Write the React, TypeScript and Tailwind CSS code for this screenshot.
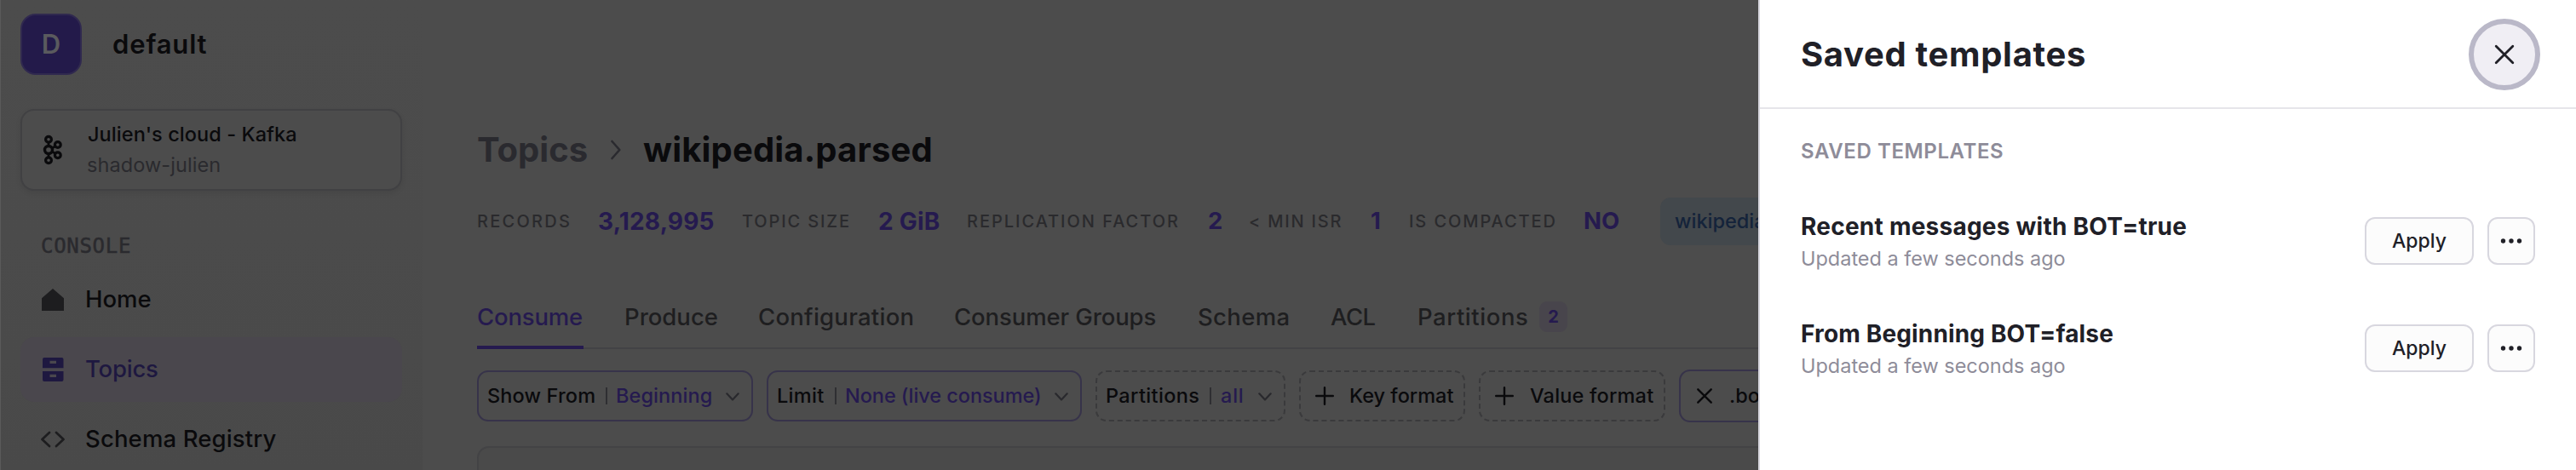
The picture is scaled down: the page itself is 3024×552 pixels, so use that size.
import React from "react";

function Chevron({ className }: { className: string }) {
  return (
    <svg className={className} width="16" height="10" viewBox="0 0 16 10" fill="none" stroke="#29292d" strokeWidth="2.2" strokeLinecap="round" strokeLinejoin="round">
      <path d="M1.3 1.3 8 8.4l6.7-7.1" />
    </svg>
  );
}

function Plus() {
  return (
    <svg className="w-[22px] shrink-0" height="22" viewBox="0 0 22 22" fill="none" stroke="#0a0a0c" strokeWidth="2.4" strokeLinecap="round">
      <path d="M11 1.2v19.6M1.2 11h19.6" />
    </svg>
  );
}

function KafkaLogo() {
  return (
    <svg className="shrink-0" width="24" height="36" viewBox="0 0 24 36" fill="none" stroke="#0a0a0c">
      <path strokeWidth="2.8" d="M7 9v5M7 22v5M11 16l4-2.2M11 20l4 2.2" />
      <circle cx="7" cy="5.8" r="3.4" strokeWidth="3.200" />
      <circle cx="7" cy="18" r="4.500" strokeWidth="3.400" />
      <circle cx="7" cy="30.2" r="3.4" strokeWidth="3.200" />
      <circle cx="17.8" cy="12" r="3.4" strokeWidth="3.200" />
      <circle cx="17.8" cy="24.2" r="3.4" strokeWidth="3.200" />
    </svg>
  );
}

function Sidebar() {
  return (
    <aside className="flex w-[496px] shrink-0 flex-col overflow-hidden border-l border-[#5a5a5a] bg-linear-to-b from-[#4c4c4c] via-[#4b4b4b] to-[#494949] pr-6 pl-[23px]">
      <div className="mt-4 flex h-[72px] shrink-0 items-center">
        <div className="flex size-[72px] items-center justify-center rounded-[18px] border-2 border-[#30294f] bg-[#231a4a] text-[31px] font-semibold text-[#5a5a5e]">
          D
        </div>
        <span className="ml-[36px] text-[31px] font-semibold tracking-[0.85px] text-[#0a0a0c]">default</span>
      </div>

      <div className="mt-10 flex h-[96px] shrink-0 items-center rounded-[16px] border-2 border-[#414143] bg-[#4c4c4c] pl-6 shadow-[0_3px_6px_rgba(0,0,0,0.08)]">
        <KafkaLogo />
        <div className="ml-[29px] flex flex-col text-[23.5px] leading-[36px]">
          <span className="font-medium tracking-[0.07px] text-[#0a0a0c]">Julien's cloud - Kafka</span>
          <span className="-ml-px tracking-[0.08px] text-[#2a2a2e]">shadow-julien</span>
        </div>
      </div>

      <div className="mt-[49px] h-[32px] shrink-0 pl-6 font-['DejaVu_Sans_Mono',monospace] text-[24px] leading-[32px] tracking-[0.7px] text-[#2a2a2e] [-webkit-text-stroke:0.5px_#2a2a2e]">
        CONSOLE
      </div>

      <nav className="mt-[9px] flex shrink-0 flex-col gap-[6px] text-[27.5px] font-medium text-[#0a0a0c]">
        <a className="flex h-[76px] items-center pl-6">
          <svg width="28" height="28" viewBox="0 0 28 28" fill="#1d1d1f">
            <path d="M14 1 27 12.2V27H1V12.2z" />
          </svg>
          <span className="ml-[24px]">Home</span>
        </a>
        <a className="flex h-[76px] items-center rounded-[16px] bg-[#4a474d] pl-6 text-[#1e1840]">
          <svg width="28" height="28" viewBox="0 0 28 28" fill="#1e1840" fillRule="evenodd">
            <path d="M4 0h20.500a2 2 0 0 1 2 2v10.200H2V2a2 2 0 0 1 2-2zM10.500 3.700v3.400h7.500V3.700z" />
            <path d="M2 16h24.500v10a2 2 0 0 1-2 2H4a2 2 0 0 1-2-2zM10.500 19.700v3.400h7.500v-3.400z" />
          </svg>
          <span className="ml-[24px] tracking-[-0.24px]">Topics</span>
        </a>
        <a className="flex h-[76px] items-center pl-6">
          <svg width="28" height="28" viewBox="0 0 28 28" fill="none" stroke="#1d1d1f" strokeWidth="2.7" strokeLinecap="round" strokeLinejoin="round">
            <path d="M10 6 1.500 14l8.500 8M18 6l8.500 8-8.500 8" />
          </svg>
          <span className="ml-[24px] tracking-[0.14px]">Schema Registry</span>
        </a>
      </nav>
    </aside>
  );
}

function Stats() {
  return (
    <div className="mt-8 flex h-14 items-center whitespace-nowrap text-[20px] font-medium text-[#2a2a2d]">
      <span className="w-[142px] shrink-0 tracking-[2.26px]">RECORDS</span>
      <b className="w-[169px] shrink-0 text-[28px] tracking-[0.2px] text-[#251a4f]">3,128,995</b>
      <span className="w-[160px] shrink-0 tracking-[1.86px]">TOPIC SIZE</span>
      <b className="w-[104px] shrink-0 text-[28px] tracking-[0.2px] text-[#251a4f]">2 GiB</b>
      <span className="w-[283px] shrink-0 tracking-[1.97px]">REPLICATION FACTOR</span>
      <b className="w-[48px] shrink-0 text-[27.5px] text-[#251a4f]">2</b>
      <span className="w-[143px] shrink-0 tracking-[1.79px]">&lt; MIN ISR</span>
      <b className="w-[45px] shrink-0 text-[27.5px] text-[#251a4f]">1</b>
      <span className="w-[205px] shrink-0 tracking-[1.91px]">IS COMPACTED</span>
      <b className="w-[90px] shrink-0 text-[27.5px] text-[#251a4f]">NO</b>
      <span className="flex h-14 shrink-0 items-center rounded-[12px] bg-[#43484c] px-[17px] text-[23.5px] text-[#14233a]">
        wikipedia
      </span>
    </div>
  );
}

function Tabs() {
  return (
    <div className="mt-[46px] flex h-[76px] border-b-2 border-[#434345] text-[27.5px] leading-[76px] font-medium whitespace-nowrap text-[#1e1e20]">
      <span className="-mb-[2px] w-[125px] shrink-0 border-b-4 border-[#251a4f] tracking-[-0.18px] text-[#251a4f]">Consume</span>
      <span className="ml-[48px] w-[157px] shrink-0">Produce</span>
      <span className="w-[230px] shrink-0 tracking-[0.26px]">Configuration</span>
      <span className="w-[286px] shrink-0 tracking-[-0.11px]">Consumer Groups</span>
      <span className="w-[156px] shrink-0 tracking-[0.35px]">Schema</span>
      <span className="w-[102px] shrink-0 tracking-[-0.58px]">ACL</span>
      <span className="w-[143px] shrink-0 tracking-[0.56px]">Partitions</span>
      <span className="mt-5 flex h-9 w-[33px] shrink-0 items-center justify-center rounded-[9px] bg-[#48454c] text-[20px] font-bold text-[#251a4f]">
        2
      </span>
    </div>
  );
}

function Divider({ className }: { className: string }) {
  return <i className={`h-5 w-[2px] shrink-0 bg-[#2f2f32] ${className}`} />;
}

function Filters() {
  return (
    <div className="mt-6 flex h-[62px] items-center gap-4 text-[23.5px] font-medium whitespace-nowrap text-[#0a0a0c]">
      <div className="flex h-[60px] w-[324px] shrink-0 items-center rounded-[13px] border-2 border-[#37334a] pl-[10px]">
        <span className="w-[139px] shrink-0 tracking-[0.15px]">Show From</span>
        <Divider className="mr-[10px]" />
        <span className="w-[129px] shrink-0 tracking-[0.08px] text-[#251a4f]">Beginning</span>
        <Chevron className="mt-px" />
      </div>
      <div className="flex h-[60px] w-[370px] shrink-0 items-center rounded-[13px] border-2 border-[#37334a] pl-[10px]">
        <span className="w-[68px] shrink-0 tracking-[0.3px]">Limit</span>
        <Divider className="mr-[10px]" />
        <span className="w-[246px] shrink-0 tracking-[-0.06px] text-[#251a4f]">None (live consume)</span>
        <Chevron className="mt-px" />
      </div>
      <div className="flex h-[60px] w-[223px] shrink-0 items-center rounded-[13px] border-2 border-dashed border-[#3a3a3c] pl-[10px]">
        <span className="w-[122px] shrink-0 tracking-[0.37px]">Partitions</span>
        <Divider className="mr-[11px]" />
        <span className="w-[44px] shrink-0 tracking-[0.8px] text-[#251a4f]">all</span>
        <Chevron className="mt-px" />
      </div>
      <div className="flex h-[60px] w-[195px] shrink-0 items-center rounded-[13px] border-2 border-dashed border-[#3a3a3c] pl-[17px]">
        <Plus />
        <span className="ml-[18px]">Key format</span>
      </div>
      <div className="flex h-[60px] w-[219px] shrink-0 items-center rounded-[13px] border-2 border-dashed border-[#3a3a3c] pl-[17px]">
        <Plus />
        <span className="ml-[19px] tracking-[0.2px]">Value format</span>
      </div>
      <div className="flex h-[62px] w-[260px] shrink-0 items-center rounded-[13px] border-2 border-[#37334a] pl-[19px]">
        <svg className="shrink-0" width="18" height="18" viewBox="0 0 18 18" fill="none" stroke="#0a0a0c" strokeWidth="2.4" strokeLinecap="round">
          <path d="M1.300 1.300 16.700 16.700M16.700 1.300 1.300 16.700" />
        </svg>
        <span className="ml-[20px]">.bot</span>
      </div>
    </div>
  );
}

function Main() {
  return (
    <main className="flex min-w-0 flex-1 flex-col overflow-hidden bg-[#4c4c4c] pl-16">
      <h1 className="mt-[146px] flex h-[60px] shrink-0 items-center text-[40px] font-bold whitespace-nowrap">
        <span className="w-[157px] text-[#2a2a2f]">Topics</span>
        <svg width="12" height="24" viewBox="0 0 12 24" fill="none" stroke="#2a2a2f" strokeWidth="2.6" strokeLinecap="round" strokeLinejoin="round">
          <path d="M1.500 2 10.300 12 1.500 22" />
        </svg>
        <span className="ml-[26px] tracking-[0.17px] text-[#0a0a0c]">wikipedia.parsed</span>
      </h1>
      <div className="-mt-[6px] flex flex-col">
        <Stats />
        <Tabs />
        <Filters />
        <div className="mt-7 h-[60px] w-[1700px] rounded-[14px] border-2 border-[#434345] bg-[#4a4a4a]" />
      </div>
    </main>
  );
}

function Template({ name, tracking }: { name: string; tracking: string }) {
  return (
    <li className="flex h-[126px] items-center">
      <div className="flex flex-1 flex-col pt-[3px]">
        <span className={`text-[28px] leading-[38px] font-bold text-[#202027] ${tracking}`}>{name}</span>
        <span className="text-[23.5px] leading-[38px] tracking-[-0.02px] text-[#8e8c99]">Updated a few seconds ago</span>
      </div>
      <button className="flex h-14 w-32 items-center justify-center rounded-[12px] border-2 border-[#d8d7df] bg-[#fcfcfc] text-[23px] font-medium text-[#202027]">
        Apply
      </button>
      <button className="ml-4 flex size-14 items-center justify-center rounded-[12px] border-2 border-[#d8d7df] bg-[#fcfcfc]">
        <svg width="26" height="6" viewBox="0 0 26 6" fill="#202027">
          <circle cx="3.500" cy="3" r="2.7" />
          <circle cx="13" cy="3" r="2.7" />
          <circle cx="22.500" cy="3" r="2.7" />
        </svg>
      </button>
    </li>
  );
}

function Drawer() {
  return (
    <section className="flex w-[960px] shrink-0 flex-col border-l-2 border-[#d8d7df] bg-white">
      <header className="flex h-[128px] items-center justify-between border-b-2 border-[#e6e5ea] pr-[42px] pl-12">
        <h2 className="mt-[2px] text-[40px] font-bold tracking-[0.68px] text-[#202027]">Saved templates</h2>
        <button className="mt-[2px] flex size-[84px] items-center justify-center rounded-full border-6 border-[#bab8c8] bg-[#f0eef4]">
          <svg width="24" height="24" viewBox="0 0 24 24" fill="none" stroke="#202027" strokeWidth="2.8" strokeLinecap="round">
            <path d="M2.200 2.200 21.800 21.800M21.800 2.200 2.200 21.800" />
          </svg>
        </button>
      </header>
      <h3 className="mt-[34px] pl-12 text-[24px] leading-[32px] font-semibold tracking-[0.6px] text-[#8e8c99]">SAVED TEMPLATES</h3>
      <ul className="mt-[26px] flex flex-col pr-12 pl-12">
        <Template name="Recent messages with BOT=true" tracking="tracking-[0.24px]" />
        <Template name="From Beginning BOT=false" tracking="tracking-[0.15px]" />
      </ul>
    </section>
  );
}

export default function App() {
  return (
    <div className="flex h-[552px] w-[3024px] overflow-hidden font-['Inter',sans-serif]">
      <Sidebar />
      <Main />
      <Drawer />
    </div>
  );
}
